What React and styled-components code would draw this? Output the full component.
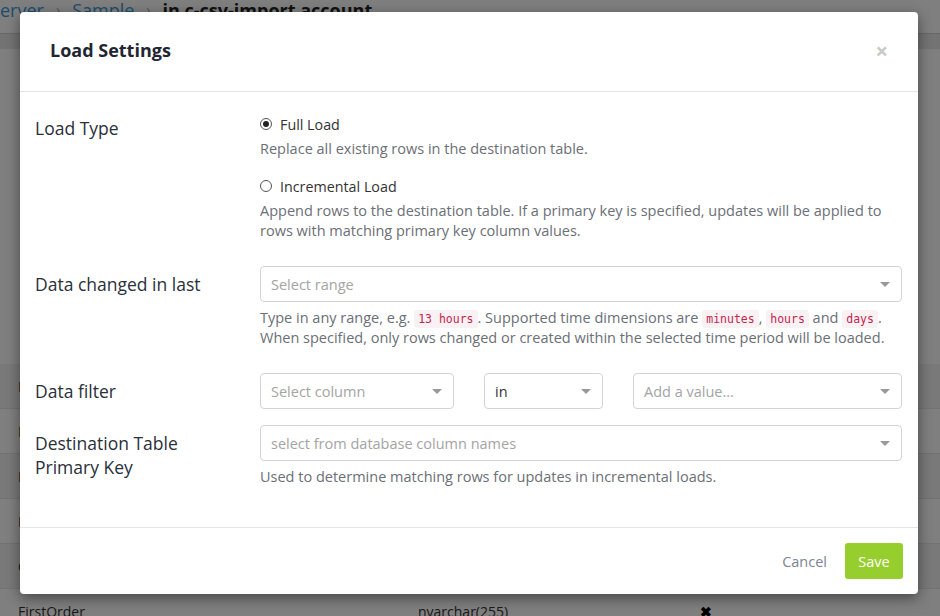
import React from "react";
import styled, { createGlobalStyle } from "styled-components";

const GlobalStyle = createGlobalStyle`
  html, body {
    margin: 0;
    padding: 0;
    background: #ffffff;
    font-family: "Open Sans", Lato, sans-serif;
    overflow: hidden;
  }
  * { box-sizing: border-box; }
`;

const Page = styled.div`
  width: 940px;
  height: 616px;
  position: relative;
  overflow: hidden;
  background: #fff;
`;

const Breadcrumb = styled.div`
  display: flex;
  align-items: flex-start;
  gap: 12px;
  height: 33px;
  font-size: 18px;
  line-height: 20px;
  color: #3c9ad9;
  white-space: nowrap;
`;

const Crumb = styled.span`
  color: ${(p) => (p.$current ? "#222" : "#3c9ad9")};
  font-weight: ${(p) => (p.$current ? 700 : 400)};
`;

const Sep = styled.span`
  color: #aaa;
  font-size: 14px;
`;

const TabStrip = styled.div`
  height: 16px;
  background: #e6e6e6;
  border-top: 1px solid #d0d0d0;
`;

const Table = styled.div`
  display: flex;
  flex-direction: column;
  padding-top: 315px;
`;

const TableRow = styled.div`
  display: grid;
  grid-template-columns: 400px 282px 1fr;
  align-items: center;
  height: 45px;
  padding-left: 18px;
  font-size: 14px;
  color: #333;
  background: ${(p) => (p.$striped ? "#f2f2f2" : "#fff")};
  border-bottom: 1px solid #e4e4e4;
`;

const RemoveMark = styled.span`
  font-weight: 900;
  font-size: 14px;
  color: #000;
`;

const Overlay = styled.div`
  position: absolute;
  inset: 0;
  background: rgba(0, 0, 0, 0.5);
  padding: 12px 0 0 20px;
`;

const Modal = styled.div`
  width: 898px;
  background: #fff;
  border-radius: 4px;
  box-shadow: 0 4px 14px rgba(0, 0, 0, 0.45);
  display: flex;
  flex-direction: column;
`;

const Header = styled.div`
  display: flex;
  align-items: center;
  justify-content: space-between;
  height: 80px;
  padding: 0 30px 4px 30px;
  border-bottom: 1px solid #e5e5e5;
`;

const Title = styled.h4`
  margin: 0;
  font-size: 18px;
  font-weight: 700;
  color: #1f2633;
`;

const Close = styled.span`
  font-size: 22px;
  font-weight: 700;
  color: #c8c8c8;
  line-height: 1;
`;

const Body = styled.div`
  display: flex;
  flex-direction: column;
  padding: 22px 16px 40px 15px;
`;

const FormRow = styled.div`
  display: grid;
  grid-template-columns: 225px 1fr;
  align-items: start;
  margin-top: ${(p) => p.$gap || 0}px;
`;

const Label = styled.div`
  font-size: 17.5px;
  line-height: 24px;
  color: #2a2f3a;
  padding-top: ${(p) => (p.$top != null ? p.$top : 6)}px;
`;

const Field = styled.div`
  display: flex;
  flex-direction: column;
`;

const RadioLine = styled.label`
  display: flex;
  align-items: center;
  gap: 8px;
  height: 20px;
  font-size: 14.3px;
  color: #333;
  margin-top: ${(p) => p.$gap || 0}px;
`;

const RadioDot = styled.span`
  width: 12px;
  height: 12px;
  border-radius: 50%;
  border: 1px solid #555;
  display: inline-flex;
  align-items: center;
  justify-content: center;
  &::after {
    content: "";
    width: 6px;
    height: 6px;
    border-radius: 50%;
    background: ${(p) => (p.$checked ? "#222" : "transparent")};
  }
`;

const Help = styled.div`
  font-size: 14.5px;
  line-height: 20px;
  color: #6b6f76;
  margin-top: ${(p) => p.$gap || 0}px;
`;

const Code = styled.code`
  font-family: "DejaVu Sans Mono", "Liberation Mono", monospace;
  font-size: 11.5px;
  line-height: 1;
  color: #c7254e;
  background: #f9f2f4;
  padding: 2px 4px;
  border-radius: 3px;
`;

const Select = styled.div`
  display: flex;
  align-items: center;
  justify-content: space-between;
  height: 36px;
  min-height: 36px;
  width: ${(p) => (p.$width ? `${p.$width}px` : "auto")};
  flex: ${(p) => (p.$width ? "none" : "1 0 auto")};
  padding: 0 11px 0 10px;
  border: 1px solid #d4d4d4;
  border-radius: 4px;
  font-size: 14.5px;
  color: ${(p) => (p.$filled ? "#333" : "#a4a4a4")};
  background: #fff;
`;

const Caret = styled.span`
  width: 0;
  height: 0;
  border-left: 5px solid transparent;
  border-right: 5px solid transparent;
  border-top: 5px solid #999;
`;

const FilterRow = styled.div`
  display: flex;
  gap: 30px;
`;

const Footer = styled.div`
  display: flex;
  align-items: center;
  justify-content: flex-end;
  gap: 18px;
  padding: 15px 15px;
  border-top: 1px solid #e5e5e5;
`;

const CancelButton = styled.button`
  border: none;
  background: none;
  font-family: inherit;
  font-size: 14.5px;
  color: #7a8595;
  padding: 0;
`;

const SaveButton = styled.button`
  height: 36px;
  width: 58px;
  border: none;
  border-radius: 3px;
  background: #96cf2d;
  color: #fff;
  font-family: inherit;
  font-size: 14.5px;
`;

const Dropdown = ({ text, filled, width }) => (
  <Select $filled={filled} $width={width}>
    <span>{text}</span>
    <Caret />
  </Select>
);

export default function App() {
  const rows = ["Id", "Name", "Email", "Phone", "City", "FirstOrder"];
  return (
    <>
      <GlobalStyle />
      <Page>
        <Breadcrumb>
          <Crumb>erver</Crumb>
          <Sep>›</Sep>
          <Crumb>Sample</Crumb>
          <Sep>›</Sep>
          <Crumb $current>in c-csv-import account</Crumb>
        </Breadcrumb>
        <TabStrip />
        <Table>
          {rows.map((r, i) => (
            <TableRow key={r} $striped={i % 2 === 0}>
              <span>{r}</span>
              <span>nvarchar(255)</span>
              <RemoveMark>✖</RemoveMark>
            </TableRow>
          ))}
        </Table>

        <Overlay>
          <Modal>
            <Header>
              <Title>Load Settings</Title>
              <Close>×</Close>
            </Header>
            <Body>
              <FormRow>
                <Label $top={2}>Load Type</Label>
                <Field>
                  <RadioLine>
                    <RadioDot $checked />
                    Full Load
                  </RadioLine>
                  <Help $gap={5}>Replace all existing rows in the destination table.</Help>
                  <RadioLine $gap={17}>
                    <RadioDot />
                    Incremental Load
                  </RadioLine>
                  <Help $gap={5}>
                    Append rows to the destination table. If a primary key is specified, updates will be applied to
                    rows with matching primary key column values.
                  </Help>
                </Field>
              </FormRow>

              <FormRow $gap={25}>
                <Label>Data changed in last</Label>
                <Field>
                  <Dropdown text="Select range" />
                  <Help $gap={6}>
                    Type in any range, e.g. <Code>13 hours</Code>. Supported time dimensions are{" "}
                    <Code>minutes</Code>, <Code>hours</Code> and <Code>days</Code>.
                    <br />
                    When specified, only rows changed or created within the selected time period will be loaded.
                  </Help>
                </Field>
              </FormRow>

              <FormRow $gap={25}>
                <Label>Data filter</Label>
                <FilterRow>
                  <Dropdown text="Select column" width={194} />
                  <Dropdown text="in" filled width={119} />
                  <Dropdown text="Add a value..." />
                </FilterRow>
              </FormRow>

              <FormRow $gap={16}>
                <Label>
                  Destination Table
                  <br />
                  Primary Key
                </Label>
                <Field>
                  <Dropdown text="select from database column names" />
                  <Help $gap={6}>Used to determine matching rows for updates in incremental loads.</Help>
                </Field>
              </FormRow>
            </Body>
            <Footer>
              <CancelButton>Cancel</CancelButton>
              <SaveButton>Save</SaveButton>
            </Footer>
          </Modal>
        </Overlay>
      </Page>
    </>
  );
}
